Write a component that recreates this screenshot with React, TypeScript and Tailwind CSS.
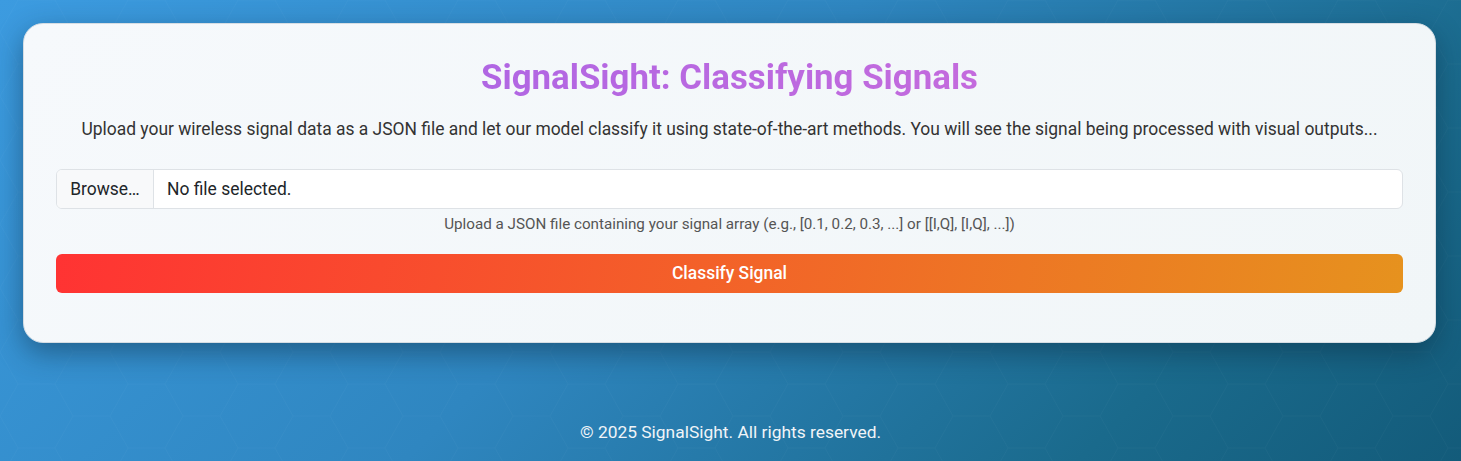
export default function App() {
  return (
    <div
      className="relative min-h-[461px] w-full overflow-hidden bg-[linear-gradient(135deg,#3c9be0_0%,#2f86c0_45%,#1a6a8c_80%,#135b7a_100%)] text-[#212529]"
      style={{ fontFamily: 'Roboto, "Liberation Sans", sans-serif' }}
    >
      <svg className="pointer-events-none absolute inset-0 h-full w-full opacity-[0.025]" aria-hidden>
        <defs>
          <pattern id="hex" width="110" height="64" patternUnits="userSpaceOnUse">
            <path d="M0 32 L18 0 L55 0 L73 32 L55 64 L18 64 Z M73 32 L110 32" fill="none" stroke="#fff" strokeWidth="1" />
          </pattern>
        </defs>
        <rect width="100%" height="100%" fill="url(#hex)" />
      </svg>

      <main className="relative ml-[23px] mr-[25px] pt-[23px]">
        <div className="rounded-[20px] border border-[#d6dde3] bg-[linear-gradient(135deg,#f6f9fc,#f1f6f8)] px-8 pb-[49px] pt-[33px] shadow-[0_10px_28px_rgba(10,40,60,0.45)]">
          <h1 className="bg-[linear-gradient(90deg,#a062e8,#d46fd8)] bg-clip-text text-center text-[34.85px] font-bold leading-[42px] text-transparent">
            SignalSight: Classifying Signals
          </h1>
          <p className="mt-[17px] text-center text-[17.45px] leading-[26px] text-[#333]">
            Upload your wireless signal data as a JSON file and let our model classify it using state-of-the-art methods. You will see the signal being processed with visual outputs...
          </p>

          <div className="mt-[27px] flex h-10 overflow-hidden rounded-md border border-[#dee2e6] bg-white text-[17.45px]">
            <div className="flex w-[97px] items-center justify-center border-r border-[#dee2e6] bg-[#f8f9fa] text-[#212529]">
              Browse…
            </div>
            <div className="flex items-center pl-[13px] text-[#212529]">No file selected.</div>
          </div>
          <p className="mt-[4px] text-center text-[15.2px] leading-[23px] text-[#555]">
            Upload a JSON file containing your signal array (e.g., [0.1, 0.2, 0.3, ...] or [[I,Q], [I,Q], ...])
          </p>

          <button className="mt-[18px] flex h-[39px] w-full items-center justify-center rounded-md bg-[linear-gradient(100deg,#ff3333,#e6921e)] text-[17.45px] font-medium text-white">
            Classify Signal
          </button>
        </div>
      </main>

      <footer className="relative mt-[76px] text-center text-[17.4px] leading-[26px] text-[#f0f4f8]">
        © 2025 SignalSight. All rights reserved.
      </footer>
    </div>
  )
}
